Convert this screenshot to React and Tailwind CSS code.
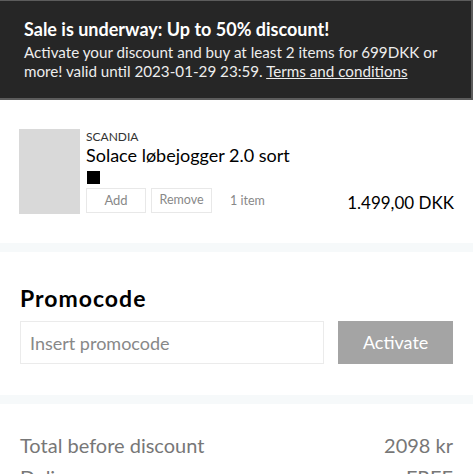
export default function App() {
  return (
    <div className="w-[473px] h-[474px] overflow-hidden bg-white font-['Lato',sans-serif]">
      <div className="bg-[#262626] border-r-2 border-b-2 border-t border-[#5c5c5c] px-6 pt-[17px] h-[100px]">
        <div className="text-white font-bold text-[18px] leading-[22px]">Sale is underway: Up to 50% discount!</div>
        <div className="text-[#ededed] text-[15.2px] leading-[19px] mt-[3px]">
          Activate your discount and buy at least 2 items for 699DKK or more! valid until 2023-01-29 23:59.{" "}
          <span className="underline">Terms and conditions</span>
        </div>
      </div>
      <div className="px-[19px] pt-[29px] h-[143px]">
        <div className="flex">
          <div className="w-[61px] h-[85px] bg-[#d9d9d9]" />
          <div className="ml-[6px] flex-1 flex flex-col">
            <div className="text-[12px] leading-[14px] text-[#333] mt-[1px]">SCANDIA</div>
            <div className="text-[18px] leading-[22px] text-black">Solace løbejogger 2.0 sort</div>
            <div className="w-[13px] h-[13px] bg-black ml-[1px] mt-[5px]" />
            <div className="flex items-center mt-[4px] h-[25px]">
              <button className="w-[60px] h-[25px] border border-[#e8e8e8] text-[13px] text-[#888]">Add</button>
              <button className="ml-[5px] w-[61px] h-[25px] border border-[#e8e8e8] text-[12.5px] text-[#888]">Remove</button>
              <span className="ml-[18px] text-[12.5px] text-[#888] mt-[1px]">1 item</span>
              <span className="ml-auto text-[17px] text-black mt-[4px]">1.499,00 DKK</span>
            </div>
          </div>
        </div>
      </div>
      <div className="h-[9px] bg-[#f6f9fa]" />
      <div className="px-[20px] pt-[32px] h-[143px]">
        <div className="text-[23px] font-bold text-black leading-[28px] tracking-[1px]">Promocode</div>
        <div className="flex mt-[9px]">
          <input
            placeholder="Insert promocode"
            className="w-[305px] h-[43px] border border-[#ebebeb] px-[9px] text-[18px] placeholder-[#888] outline-none"
          />
          <button className="ml-[14px] w-[115px] h-[43px] bg-[#a4a4a4] text-white text-[18px]">Activate</button>
        </div>
      </div>
      <div className="h-[9px] bg-[#f6f9fa]" />
      <div className="px-[20px] pt-[29px]">
        <div className="flex justify-between text-[20px] text-[#777] leading-[24px]">
          <span>Total before discount</span>
          <span>2098 kr</span>
        </div>
        <div className="flex justify-between text-[20px] text-[#777] leading-[24px] mt-[8px]">
          <span>Delivery</span>
          <span>FREE</span>
        </div>
      </div>
    </div>
  );
}
